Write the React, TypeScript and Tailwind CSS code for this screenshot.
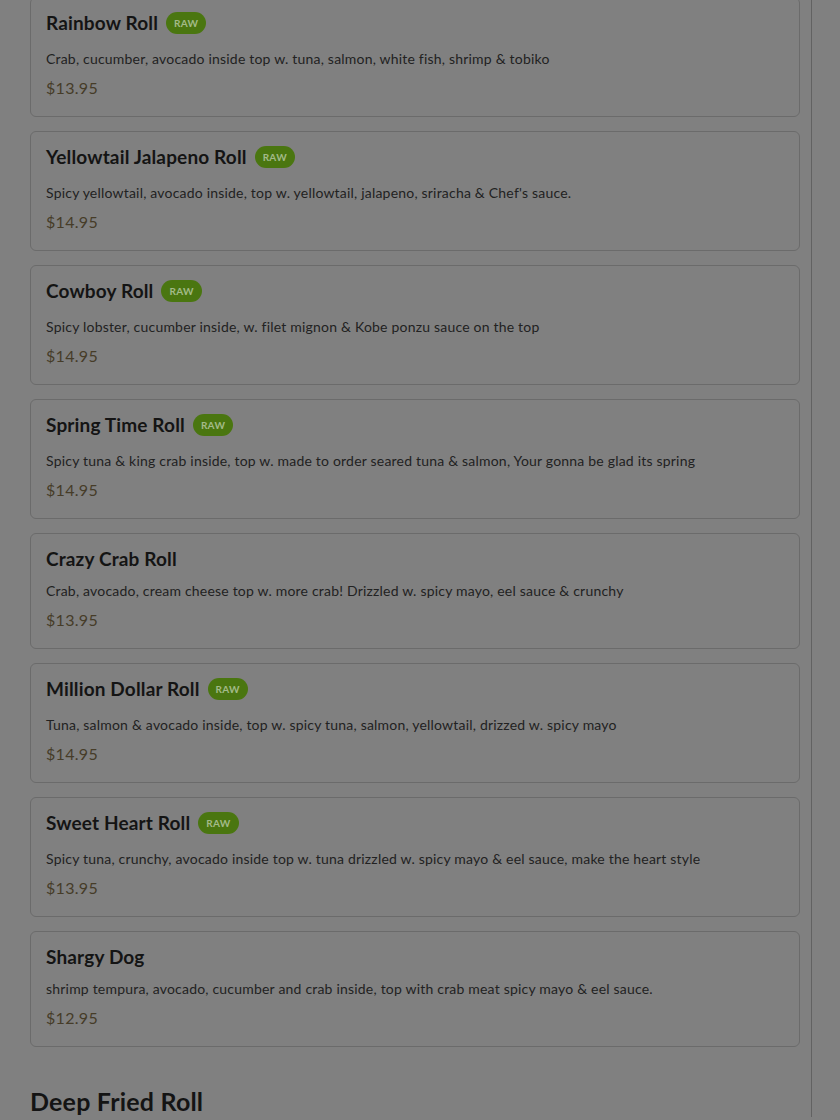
import React from "react";

type Item = { name: string; raw: boolean; desc: string; price: string };

const items: Item[] = [
  { name: "Rainbow Roll", raw: true, desc: "Crab, cucumber, avocado inside top w. tuna, salmon, white fish, shrimp & tobiko", price: "$13.95" },
  { name: "Yellowtail Jalapeno Roll", raw: true, desc: "Spicy yellowtail, avocado inside, top w. yellowtail, jalapeno, sriracha & Chef's sauce.", price: "$14.95" },
  { name: "Cowboy Roll", raw: true, desc: "Spicy lobster, cucumber inside, w. filet mignon & Kobe ponzu sauce on the top", price: "$14.95" },
  { name: "Spring Time Roll", raw: true, desc: "Spicy tuna & king crab inside, top w. made to order seared tuna & salmon, Your gonna be glad its spring", price: "$14.95" },
  { name: "Crazy Crab Roll", raw: false, desc: "Crab, avocado, cream cheese top w. more crab! Drizzled w. spicy mayo, eel sauce & crunchy", price: "$13.95" },
  { name: "Million Dollar Roll", raw: true, desc: "Tuna, salmon & avocado inside, top w. spicy tuna, salmon, yellowtail, drizzed w. spicy mayo", price: "$14.95" },
  { name: "Sweet Heart Roll", raw: true, desc: "Spicy tuna, crunchy, avocado inside top w. tuna drizzled w. spicy mayo & eel sauce, make the heart style", price: "$13.95" },
  { name: "Shargy Dog", raw: false, desc: "shrimp tempura, avocado, cucumber and crab inside, top with crab meat spicy mayo & eel sauce.", price: "$12.95" },
];

function Card({ item }: { item: Item }) {
  return (
    <div className="rounded-md border border-[#6b6b6b] bg-[#808080] pl-[15px] pr-4 pt-3 pb-4">
      <div className={"flex items-center gap-2 " + (item.raw ? "pb-1" : "")}>
        <h3 className="h-7 text-[19px] font-bold leading-[26px] tracking-[0.15px] text-[#141414]">{item.name}</h3>
        {item.raw && (
          <span className="-mt-[2px] flex h-[22px] items-center rounded-full bg-[#4a7610] px-[8px] text-[10px] font-bold tracking-[0.3px] text-[#a3ba88]">
            RAW
          </span>
        )}
      </div>
      <p className="mt-2 -translate-y-px text-[14px] leading-5 tracking-[0.2px] text-[#222222]">{item.desc}</p>
      <p className="mt-[6px] text-[16px] leading-6 tracking-[0.3px] text-[#463c28]">{item.price}</p>
    </div>
  );
}

export default function App() {
  return (
    <div
      className="h-[1120px] w-[840px] overflow-hidden bg-[#808080]"
      style={{ fontFamily: "Lato, 'Noto Sans', sans-serif" }}
    >
      <div className="h-full w-[812px] border-r border-[#626262] pl-[30px] pr-[11px]">
        <div className="-mt-[3px] flex flex-col gap-[14px]">
          {items.map((it) => (
            <Card key={it.name} item={it} />
          ))}
        </div>
        <h2 className="mt-[38px] text-[25px] font-bold leading-8 tracking-[0.2px] text-[#141414]">Deep Fried Roll</h2>
      </div>
    </div>
  );
}
